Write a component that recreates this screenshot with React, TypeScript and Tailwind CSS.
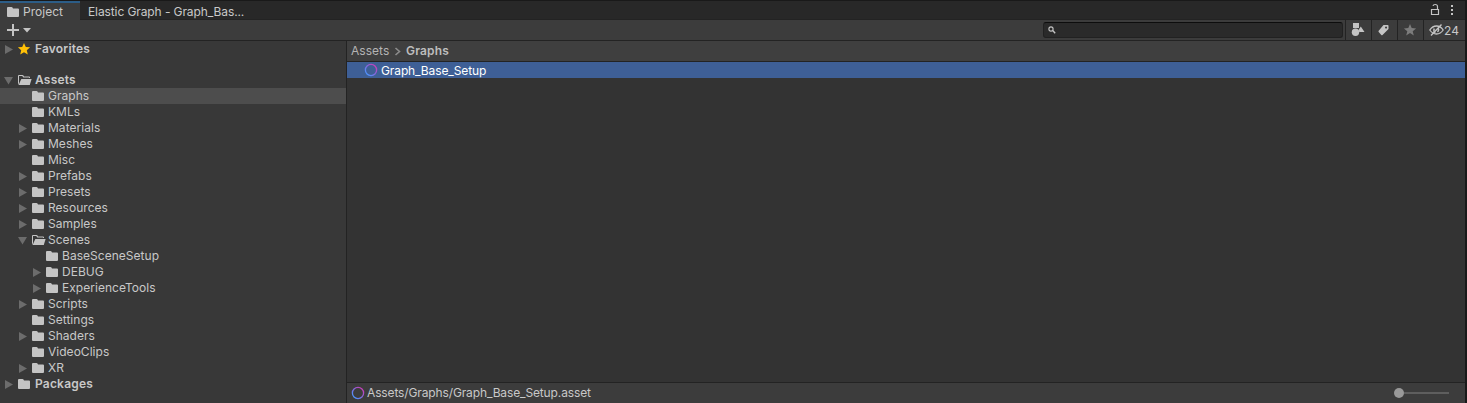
import React from 'react';

type Kind = 'closed' | 'open' | 'leaf';
interface Item {
  name: string;
  depth: 0 | 1 | 2;
  kind: Kind;
  selected?: boolean;
}

const items: Item[] = [
  { name: 'Assets', depth: 0, kind: 'open' },
  { name: 'Graphs', depth: 1, kind: 'leaf', selected: true },
  { name: 'KMLs', depth: 1, kind: 'leaf' },
  { name: 'Materials', depth: 1, kind: 'closed' },
  { name: 'Meshes', depth: 1, kind: 'closed' },
  { name: 'Misc', depth: 1, kind: 'leaf' },
  { name: 'Prefabs', depth: 1, kind: 'closed' },
  { name: 'Presets', depth: 1, kind: 'closed' },
  { name: 'Resources', depth: 1, kind: 'closed' },
  { name: 'Samples', depth: 1, kind: 'closed' },
  { name: 'Scenes', depth: 1, kind: 'open' },
  { name: 'BaseSceneSetup', depth: 2, kind: 'leaf' },
  { name: 'DEBUG', depth: 2, kind: 'closed' },
  { name: 'ExperienceTools', depth: 2, kind: 'closed' },
  { name: 'Scripts', depth: 1, kind: 'closed' },
  { name: 'Settings', depth: 1, kind: 'leaf' },
  { name: 'Shaders', depth: 1, kind: 'closed' },
  { name: 'VideoClips', depth: 1, kind: 'leaf' },
  { name: 'XR', depth: 1, kind: 'closed' },
  { name: 'Packages', depth: 0, kind: 'closed' },
];

const indent = ['pl-[4px]', 'pl-[18px]', 'pl-[32px]'];

function Arrow({ kind }: { kind: Kind }) {
  return (
    <svg width="10" height="16" viewBox="0 0 10 16" className="shrink-0 fill-[#6c6c6c]">
      {kind === 'closed' && <path d="M1 4v9l8-4.5z" />}
      {kind === 'open' && <path d="M0 5h9l-4.5 7.5z" />}
    </svg>
  );
}

function Folder({ open = false }: { open?: boolean }) {
  return (
    <svg width="14" height="16" viewBox="0 0 14 16" className="shrink-0 fill-[#c4c4c4]">
      {open ? (
        <>
          <path d="M0 4q0-1 1-1h3.5q.6 0 1 .6l.5.9H11q1 0 1 1V6h-1v-.5H5.3L4.2 4H1v7L0 13z" />
          <path d="M3.3 7H13.6L11.8 13H0.6z" />
        </>
      ) : (
        <path d="M0 4q0-1 1-1h3.5q.6 0 1 .6L6 4.5h5q1 0 1 1V12q0 1-1 1H1q-1 0-1-1z" />
      )}
    </svg>
  );
}

function Ring({ id }: { id: string }) {
  return (
    <svg width="14" height="14" viewBox="0 0 14 14" className="shrink-0">
      <defs>
        <linearGradient id={id} x1="0" y1="1" x2="1" y2="0">
          <stop offset="0.1" stopColor="#4a96ff" />
          <stop offset="0.5" stopColor="#8468dc" />
          <stop offset="0.9" stopColor="#cc3cb8" />
        </linearGradient>
      </defs>
      <circle cx="7" cy="7" r="5.6" fill="none" stroke={`url(#${id})`} strokeWidth="1.3" />
    </svg>
  );
}

function TreeRow({ item }: { item: Item }) {
  return (
    <div className={`flex h-4 shrink-0 items-center ${indent[item.depth]} ${item.selected ? 'bg-[#4d4d4d]' : ''}`}>
      <Arrow kind={item.kind} />
      <span className="w-1 shrink-0" />
      <Folder open={item.kind === 'open'} />
      <span className={item.depth === 0 ? 'pl-[3px] font-semibold tracking-[0.2px]' : 'pl-[2px]'}>{item.name}</span>
    </div>
  );
}

export default function App() {
  return (
    <div className="flex h-[403px] w-[1467px] overflow-hidden bg-[#191919] pt-px pr-[2px] font-['Inter',sans-serif] text-[12px] leading-4 tracking-[0.03px] whitespace-nowrap text-[#c8c8c8]">
      <div className="flex w-full flex-col bg-[#383838]">
        <header className="flex h-[19px] shrink-0 bg-[#282828]">
          <div className="flex w-20 items-center border-t-2 border-[#2c5d87] bg-[#3c3c3c] pl-[7px]">
            <Folder />
            <span className="pt-px pl-[2px]">Project</span>
          </div>
          <div className="flex flex-1 items-center border-b border-[#232323] pt-[3px] pl-2 tracking-[-0.1px]">Elastic Graph - Graph_Bas...</div>
          <div className="flex w-[35px] border-b border-[#232323]">
            <svg width="35" height="18" viewBox="0 0 35 18" className="fill-none stroke-[#c4c4c4]">
              <path d="M1.5 8.5h7v5h-7zM3 5q.3-1.5 2.2-1.5 2.3 0 2.3 2v3" strokeWidth="1.2" />
              <path d="M21 4h2v2h-2zM21 8h2v2h-2zM21 12h2v2h-2z" className="fill-[#c4c4c4] stroke-none" />
            </svg>
          </div>
        </header>

        <div className="flex h-[21px] shrink-0 items-center border-b border-[#232323] bg-[#3c3c3c]">
          <svg width="36" height="20" viewBox="0 0 36 20" className="fill-[#c4c4c4]">
            <path d="M12 4h2v5h5v2h-5v5h-2v-5H7V9h5zM23 8h8l-4 4.5z" />
          </svg>
          <div className="ml-auto flex h-4 w-[300px] items-center rounded-[3px] border border-[#212121] border-t-[#0d0d0d] bg-[#2a2a2a] pl-1">
            <svg width="9" height="10" viewBox="0 0 9 10" className="fill-none stroke-[#c4c4c4]">
              <circle cx="3" cy="4" r="2.1" strokeWidth="1.1" />
              <path d="M4.7 5.6L7.2 8.2" strokeWidth="1.4" />
            </svg>
          </div>
          <div className="ml-[2px] flex h-5 w-[26px] border-l border-[#232323]">
            <svg width="25" height="20" viewBox="0 0 25 20" className="fill-[#c4c4c4]">
              <path d="M7 3h6v5H7zM14.8 6.5l3.7 5.5h-5.2l-.8-2z" />
              <circle cx="9.5" cy="12.3" r="3.7" />
            </svg>
          </div>
          <div className="flex h-5 w-[26px] border-l border-[#232323]">
            <svg width="25" height="20" viewBox="0 0 25 20" className="fill-[#c4c4c4]">
              <path fillRule="evenodd" d="M11.5 5h4.2q.8 0 .8.8V9l-6 6q-.6.5-1.2 0L6.7 12q-.6-.7 0-1.3zM14 6.6a1 1 0 1 0 .1 0z" />
            </svg>
          </div>
          <div className="flex h-5 w-[26px] border-l border-[#232323]">
            <svg width="25" height="20" viewBox="0 0 25 20" className="fill-[#7c7c7c]">
              <path d="M12 4l1.7 4.1 4.4.3-3.4 2.8 1.1 4.3L12 13.1l-3.8 2.4 1.1-4.3L5.9 8.4l4.4-.3z" />
            </svg>
          </div>
          <div className="flex h-5 w-[42px] items-center border-l border-[#232323] pl-[5px]">
            <svg width="15" height="14" viewBox="0 0 15 14" className="shrink-0 fill-none stroke-[#c4c4c4]">
              <path d="M.8 7Q3.5 3 7.5 3T14.2 7Q11.5 11 7.5 11T.8 7z" strokeWidth="1.3" />
              <path d="M5.2 5.5q-1 2.8 1 4.5M9 5q1.5 2-.5 4" strokeWidth="1.4" />
              <path d="M2 12.5L12.5 1.5" strokeWidth="1.4" />
            </svg>
            <span className="pt-px">24</span>
          </div>
        </div>

        <div className="flex min-h-0 flex-1">
          <aside className="flex w-[346px] shrink-0 flex-col">
            <div className="flex h-4 shrink-0 items-center pl-[4px]">
              <Arrow kind="closed" />
              <svg width="18" height="16" viewBox="0 0 18 16" className="fill-[#ffc107]">
                <path d="M10 2l1.8 4 4.3.3-3.3 2.9 1 4.3L10 11.2l-3.8 2.3 1-4.3L3.9 6.3 8.2 6z" />
              </svg>
              <span className="pl-[3px] font-semibold tracking-[0.17px]">Favorites</span>
            </div>
            <div className="h-[15px] shrink-0" />
            {items.map((item) => (
              <TreeRow key={item.name} item={item} />
            ))}
          </aside>
          <main className="flex flex-1 flex-col border-l border-[#232323] bg-[#333333]">
            <nav className="flex h-[21px] shrink-0 items-center border-b border-[#232323] bg-[#3f3f3f] pl-1">
              <span className="w-[37px] text-[#b4b4b4]">Assets</span>
              <svg width="18" height="16" viewBox="0 0 18 16" className="fill-none stroke-[#8c8c8c]">
                <path d="M7.5 5l4 3.5-4 3.5" strokeWidth="1.6" />
              </svg>
              <span className="font-semibold tracking-[0.17px] text-[#bdbdbd]">Graphs</span>
            </nav>
            <div className="flex h-4 shrink-0 items-center bg-[#3e5f96] pl-[17px] text-white">
              <Ring id="row-ring" />
              <span className="pt-px pl-[3px] tracking-[-0.11px]">Graph_Base_Setup</span>
            </div>
            <div className="flex-1" />
            <footer className="flex h-[21px] shrink-0 items-center border-t border-[#232323] bg-[#3c3c3c] pl-1">
              <Ring id="footer-ring" />
              <span className="pl-[2px] tracking-[-0.13px]">Assets/Graphs/Graph_Base_Setup.asset</span>
              <div className="mr-4 ml-auto flex items-center">
                <span className="size-[10px] rounded-full bg-[#999999]" />
                <span className="h-[2px] w-[45px] bg-[#5e5e5e]" />
              </div>
            </footer>
          </main>
        </div>
      </div>
    </div>
  );
}
